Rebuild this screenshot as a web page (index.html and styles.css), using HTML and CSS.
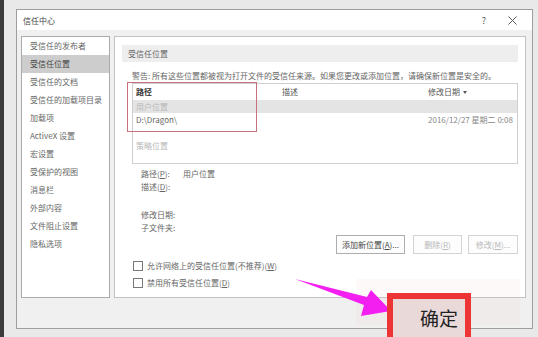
FILE: index.html
```html
<!DOCTYPE html>
<html lang="zh-CN">
<head>
    <meta charset="UTF-8">
    <title>信任中心</title>
    <link rel="stylesheet" href="styles.css">
</head>
<body>
    <div class="screen">
        <div class="strip"></div>
        <div class="dialog">
            <div class="titlebar">
                <span class="title">信任中心</span>
                <span class="help">?</span>
                <svg class="close" width="9" height="9" viewBox="0 0 9 9"><path d="M0.5 0.5 L8.5 8.5 M8.5 0.5 L0.5 8.5" stroke="#555" stroke-width="1" fill="none"/></svg>
            </div>
            <div class="content">
                <ul class="nav">
                    <li>受信任的发布者</li>
                    <li class="active">受信任位置</li>
                    <li>受信任的文档</li>
                    <li>受信任的加载项目录</li>
                    <li>加载项</li>
                    <li>ActiveX 设置</li>
                    <li>宏设置</li>
                    <li>受保护的视图</li>
                    <li>消息栏</li>
                    <li>外部内容</li>
                    <li>文件阻止设置</li>
                    <li>隐私选项</li>
                </ul>
                <div class="main">
                    <div class="section-head">受信任位置</div>
                    <p class="warning">警告: 所有这些位置都被视为打开文件的受信任来源。如果您更改或添加位置，请确保新位置是安全的。</p>
                    <div class="table">
                        <div class="row head">
                            <span class="col">路径</span>
                            <span class="col">描述</span>
                            <span class="col">修改日期 <i class="caret"></i></span>
                        </div>
                        <div class="row group">用户位置</div>
                        <div class="row item">
                            <span class="col">D:\Dragon\</span>
                            <span class="col"></span>
                            <span class="col">2016/12/27 星期二 0:08</span>
                        </div>
                        <div class="row group policy">策略位置</div>
                    </div>
                    <div class="details">
                        <div class="detail"><span class="label">路径(<u>P</u>):</span><span>用户位置</span></div>
                        <div class="detail"><span class="label">描述(<u>D</u>):</span></div>
                        <div class="detail spaced"><span class="label">修改日期:</span></div>
                        <div class="detail"><span class="label">子文件夹:</span></div>
                    </div>
                    <div class="actions">
                        <button class="btn">添加新位置(<u>A</u>)...</button>
                        <button class="btn disabled">删除(<u>R</u>)</button>
                        <button class="btn disabled">修改(<u>M</u>)...</button>
                    </div>
                    <div class="checks">
                        <label class="check"><span class="box"></span>允许网络上的受信任位置(不推荐)(<u>W</u>)</label>
                        <label class="check"><span class="box"></span>禁用所有受信任位置(<u>D</u>)</label>
                    </div>
                </div>
            </div>
            <div class="footer"></div>
        </div>
    </div>

    <!-- annotations drawn over the screenshot -->
    <div class="smear"></div>
    <div class="mark-table"></div>
    <svg class="arrow" width="538" height="337" viewBox="0 0 538 337">
        <polygon points="295,279 367,297 371,290 391,311 361,316 364,305" fill="#f21ff0"/>
    </svg>
    <div class="ok-mark"><span>确定</span></div>
</body>
</html>
```

FILE: styles.css
```css
body {
    margin: 0;
    width: 538px;
    height: 337px;
    overflow: hidden;
    position: relative;
    background-color: #e9e9e9;
    font-family: "Noto Sans CJK SC", "Noto Sans", sans-serif;
    font-size: 8px;
    color: #555;
}
.screen {
    display: flex;
    height: 100%;
}
.strip {
    width: 4px;
    background-color: #3b3b3b;
    flex-shrink: 0;
}
.dialog {
    margin: 9px 0 0 12px;
    width: 515px;
    height: 318px;
    border: 1px solid #9e9e9e;
    background-color: #f0f0f0;
    display: flex;
    flex-direction: column;
}
.titlebar {
    height: 20px;
    background-color: #fff;
    display: flex;
    align-items: center;
    padding-left: 6px;
}
.title {
    flex: 1;
    color: #444;
}
.help {
    font-size: 9px;
    color: #555;
    margin-right: 22px;
}
.close {
    margin-right: 15px;
}
.content {
    display: flex;
    gap: 4px;
    padding: 6px 6px 0 4px;
    height: 262px;
}
.nav {
    list-style: none;
    margin: 0;
    padding: 0;
    width: 87px;
    background-color: #fff;
    border: 1px solid #ababab;
}
.nav li {
    height: 18px;
    line-height: 18px;
    padding-left: 8px;
    white-space: nowrap;
    color: #666;
}
.nav li.active {
    background-color: #cdcdcd;
    color: #444;
}
.main {
    flex: 1;
    background-color: #fff;
    border: 1px solid #c2c2c2;
    padding: 8px 7px 0 7px;
}
.section-head {
    height: 17px;
    line-height: 17px;
    background-color: #eeeeee;
    padding-left: 6px;
    color: #666;
}
.warning {
    margin: 8px 0 1px 10px;
    line-height: 12px;
    white-space: nowrap;
    color: #666;
}
.table {
    margin-left: 10px;
    height: 79px;
    border: 1px solid #cfcfcf;
}
.row {
    display: flex;
    white-space: nowrap;
}
.col {
    width: 146px;
    padding-left: 3px;
    box-sizing: border-box;
    flex-shrink: 0;
}
.col:last-child {
    flex: 1;
    width: auto;
    overflow: hidden;
}
.row.head {
    height: 16px;
    line-height: 16px;
    border-bottom: 1px solid #e4e4e4;
    color: #555;
}
.row.head .col:first-child {
    font-weight: bold;
    color: #333;
}
.caret {
    display: inline-block;
    width: 0;
    height: 0;
    border-left: 2.5px solid transparent;
    border-right: 2.5px solid transparent;
    border-top: 3px solid #555;
    vertical-align: middle;
    margin-left: 1px;
}
.row.group {
    height: 12px;
    line-height: 12px;
    padding-left: 3px;
    color: #b8b8b8;
    background-color: #e4e4e4;
}
.row.group.policy {
    background-color: transparent;
    margin-top: 13px;
}
.row.item {
    height: 14px;
    line-height: 14px;
    color: #666;
}
.row.item .col:last-child {
    color: #888;
}
.details {
    margin-top: 3px;
    padding-left: 19px;
}
.detail {
    display: flex;
    height: 13px;
    line-height: 13px;
    color: #666;
}
.detail.spaced {
    margin-top: 15px;
}
.label {
    width: 42px;
}
.actions {
    display: flex;
    justify-content: flex-end;
    margin-top: 1px;
}
.btn {
    height: 19px;
    padding: 0;
    font-family: inherit;
    font-size: 8px;
    color: #444;
    background-color: #fdfdfd;
    border: 1px solid #adadad;
    width: 69px;
    margin-left: 8px;
}
.btn.disabled {
    color: #b8b8b8;
    border-color: #d4d4d4;
    width: 49px;
}
.btn.disabled:last-child {
    width: 50px;
    margin-left: 6px;
}
.checks {
    margin-top: 3px;
    padding-left: 11px;
}
.check {
    display: flex;
    align-items: center;
    height: 17px;
    color: #666;
}
.box {
    width: 8px;
    height: 8px;
    border: 1px solid #777;
    background-color: #fff;
    margin-right: 4px;
}
.footer {
    flex: 1;
}
.smear {
    position: absolute;
    left: 356px;
    top: 279px;
    width: 164px;
    height: 46px;
    background-color: rgba(236, 196, 196, 0.1);
}
.mark-table {
    position: absolute;
    left: 127px;
    top: 82px;
    width: 128px;
    height: 48px;
    border: 1px solid #c8707e;
}
.arrow {
    position: absolute;
    left: 0;
    top: 0;
}
.ok-mark {
    position: absolute;
    left: 387px;
    top: 293px;
    width: 72px;
    height: 40px;
    border: 6px solid #ee3535;
    background-color: #ead9d9;
}
.ok-mark span {
    display: block;
    padding-left: 27px;
    line-height: 38px;
    font-size: 19px;
    color: #222;
}
```
